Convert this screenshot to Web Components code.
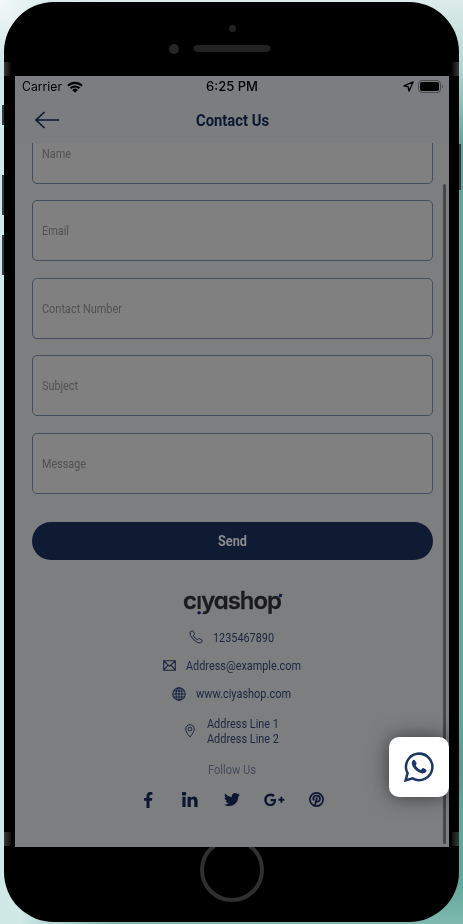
<!DOCTYPE html>
<html lang="en"><head><meta charset="utf-8"><title>Contact Us</title>
<style>html,body{margin:0;width:463px;height:924px;overflow:hidden}</style></head>
<body><contact-page></contact-page>
<script>
class FitText extends HTMLElement{
  connectedCallback(){
    const w=+this.getAttribute('w');
    const r=this.attachShadow({mode:'open'});
    r.innerHTML=`<style>:host{display:block;width:${w}px;white-space:nowrap;flex:none}span{display:inline-block;transform-origin:0 50%}</style><span><slot></slot></span>`;
    const s=r.querySelector('span');
    s.style.transform=`scaleX(${w/s.getBoundingClientRect().width})`;
  }
}
const GLYPHS={
 back:[24,18,'<path d="M24 9H1M9.500 1L1 9l8.500 8" fill="none" stroke="currentColor" stroke-width="1.6"/>'],
 wifi:[16,12,'<path d="M1 4.700a10 10 0 0 1 14 0M3.500 7.300a6.500 6.500 0 0 1 9 0" fill="none" stroke="currentColor" stroke-width="2.100"/><path d="M5.200 8.900a4 4 0 0 1 5.600 0L8 11.700z" fill="currentColor"/>'],
 nav:[11,11,'<path d="M10.200.8L.9 4.900l4.300.9.800 4.400z" fill="none" stroke="currentColor" stroke-width="1.300" stroke-linejoin="round"/>'],
 battery:[26,13,'<rect x=".5" y=".5" width="22" height="12" rx="3.500" fill="none" stroke="#484a4d"/><rect x="2" y="2" width="19" height="9" rx="2" fill="#000"/><path d="M24 4.500q2 1.700 0 4z" fill="#484a4d"/>'],
 phone:[14,14,'<path d="M1 2.200L3 .8q.6-.3 1 .3l1.500 2.500q.3.600-.2 1L4.200 5.600q1.400 2.800 4.200 4.200l1-1.100q.4-.5 1-.2l2.500 1.500q.6.400.3 1l-1.400 2q-2.800.9-7.300-3.500T1 2.200z" fill="none" stroke="currentColor" stroke-width="1"/>'],
 mail:[13,11,'<path d="M.7.8h11.600v9.400H.7zM.7.8l5.800 5.400L12.300.8M.7 10.200l4.200-5M12.300 10.200l-4.200-5" fill="none" stroke="currentColor" stroke-width="1.100"/>'],
 globe:[14,14,'<g fill="none" stroke="currentColor" stroke-width="1.100"><circle cx="7" cy="7" r="6.200"/><ellipse cx="7" cy="7" rx="3" ry="6.200"/><path d="M7 .8v12.400M.8 7h12.400M1.800 4h10.400M1.800 10h10.400"/></g>'],
 pin:[10,14,'<g fill="none" stroke="currentColor"><path d="M5 13Q.7 7.800.7 5a4.300 4.300 0 0 1 8.600 0Q9.300 7.800 5 13z"/><circle cx="5" cy="5" r="1.900"/></g>'],
 facebook:[10,16,'<path d="M9.400.2v2.600H7.900c-1.100 0-1.400.6-1.400 1.300v1.800h2.800l-.4 2.800H6.500V16h-3V8.700H1V5.900h2.500V3.800C3.500 1.400 5 0 7.200 0c1 0 1.900.1 2.200.2z" fill="currentColor"/>'],
 linkedin:[16,15,'<path d="M.4 4.800h3.200V15H.4zM2 0a1.800 1.800 0 1 1 0 3.500A1.800 1.800 0 1 1 2 0zM5.600 4.800h3.200v1.500c.5-.8 1.400-1.700 3-1.700 2.300 0 3.800 1.400 3.800 4.500V15h-3.300V9.500c0-1.400-.5-2.300-1.700-2.300S8.800 8.100 8.800 9.500V15H5.600z" fill="currentColor"/>'],
 twitter:[16,14,'<path d="M16 1.700c-.5.700-1 1.200-1.700 1.700v.4c0 4.500-3.300 9.300-9.300 9.300-1.800 0-3.600-.5-5-1.500 1.700.2 3.400-.3 4.800-1.400-1.400 0-2.600-1-3-2.300.5.100 1 .1 1.400-.1C1.700 7.500.6 6.200.6 4.600c.5.300 1 .4 1.500.4C.6 4 .2 2 1.100.6c1.600 2 4 3.300 6.800 3.400C7.400 1.900 9 0 11.100 0c1 0 1.800.4 2.400 1 .7-.1 1.400-.4 2-.8-.2.800-.7 1.400-1.400 1.800.7-.1 1.300-.2 1.900-.3z" fill="currentColor"/>'],
 google:[21,14,'<path d="M12 5.900c.5 4.400-2.200 7.200-5.400 7.200A6.300 6.300 0 1 1 10.800 2.200L9 4C8.300 3.400 7.500 3.100 6.600 3.100a3.900 3.900 0 0 0 0 7.800c1.900 0 2.900-1.200 3.100-2.600H6.600V5.900zM16.400 3.800h1.900v2h2v1.900h-2v2h-1.900v-2h-2V5.800h2z" fill="currentColor"/>'],
 pinterest:[15,15,'<circle cx="7.500" cy="7.500" r="6.600" fill="none" stroke="currentColor" stroke-width="1.700"/><path d="M5 8.400C3.300 5.700 5 3.600 7.600 3.600c4.600 0 4.200 6.100.8 6.100-.8 0-1.200-.4-1.400-.7M8 5.500L6 13" fill="none" stroke="currentColor" stroke-width="1.800"/>'],
 whatsapp:[30,30,'<path d="M1.600 28.400l2-7.200a13.200 13.200 0 1 1 5 5.100z" fill="none" stroke="currentColor" stroke-width="2.500"/><path d="M10.800 8.200c-.5-.9-1.400-.5-1.900 0-4.400 4.800 5.500 15 11.400 12.900 1.400-.5 2.200-1.400 2-3 0-.6-2.800-2-3.400-2-.7 0-1.300 1.700-2 1.800-1.600 0-5-3.300-5.100-4.600-.1-.7 1.100-1.100.8-2.200z" fill="currentColor"/>']
};
class UiIcon extends HTMLElement{
  connectedCallback(){
    const [w,h,p]=GLYPHS[this.getAttribute('name')];
    this.attachShadow({mode:'open'}).innerHTML=`<style>:host{display:block;width:${w}px;height:${h}px;flex:none}svg{display:block}</style><svg width="${w}" height="${h}" viewBox="0 0 ${w} ${h}">${p}</svg>`;
  }
}
class FormField extends HTMLElement{
  connectedCallback(){
    this.attachShadow({mode:'open'}).innerHTML=`<style>:host{box-sizing:border-box;height:61px;border:1px solid #454e60;border-radius:5px;background:#808080;display:flex;align-items:center;padding-left:9px;color:#515151;font-size:13px;flex:none}</style><fit-text w="${this.getAttribute('w')}">${this.getAttribute('label')}</fit-text>`;
  }
}
class ContactRow extends HTMLElement{
  connectedCallback(){
    this.attachShadow({mode:'open'}).innerHTML=`<style>:host{display:flex;justify-content:center;align-items:center;gap:var(--gap,10px);color:#1b2740;font-size:13px;line-height:15px}</style><ui-icon name="${this.getAttribute('icon')}"></ui-icon><div><slot></slot></div>`;
  }
}
class BrandLogo extends HTMLElement{
  connectedCallback(){
    this.attachShadow({mode:'open'}).innerHTML=`<style>:host{display:flex;align-items:flex-start;height:26px;font:600 24px/26px Inter,sans-serif;color:#1b1b1d;letter-spacing:-1px;font-feature-settings:"cv11"}
    .i{display:inline-block;height:26px;vertical-align:top;transform:translateY(3px) rotate(180deg);color:transparent;background:linear-gradient(#0b1b48 0 8px,#1b1b1d 8px);background-clip:text;-webkit-background-clip:text;letter-spacing:0;margin-right:-1px}
    b{width:3px;height:3px;margin:6px 0 0 -2px;background:#0b1b48;transform:rotate(20deg)}
    fit-text{-webkit-text-stroke:.3px #1b1b1d}.i{-webkit-text-stroke:0}</style><fit-text w="98">c<span class="i">i</span>yashop</fit-text><b></b>`;
  }
}
class PhoneTop extends HTMLElement{
  connectedCallback(){
    this.attachShadow({mode:'open'}).innerHTML=`<style>:host{height:74px;display:flex;flex-direction:column;align-items:center}
    .cam{width:7px;height:7px;border-radius:50%;background:#222;margin:23px 0 11.500px 2px}
    .sp{display:flex;align-items:center;gap:15px;margin-right:24px}.s{width:10px;height:10px;border-radius:50%;background:#272727}.bar{width:76px;height:7px;border-radius:3px;background:#222}
    .tags{display:flex;justify-content:space-between;align-self:stretch;margin-top:8.500px}.tags i{width:8px;height:14px;background:linear-gradient(90deg,#393939,#000)}.tags i+i{transform:scaleX(-1)}</style>
    <div class="cam"></div><div class="sp"><div class="s"></div><div class="bar"></div></div><div class="tags"><i></i><i></i></div>`;
  }
}
class ContactPage extends HTMLElement{
  connectedCallback(){
    this.attachShadow({mode:'open'}).innerHTML=`<style>
    :host{display:block;position:relative;box-sizing:border-box;width:463px;height:924px;padding:2px 4px;background:radial-gradient(circle at 0 0,#f4f9f8,transparent 60px),linear-gradient(90deg,#d0e8e6 0,#d0e8e6 20px,transparent 110px),linear-gradient(#dcecea 0,#b9dad5 60px,#5fa79b 145px,#5fa79b 880px,#7fb9af);font-family:Roboto,sans-serif}
    .btn{position:absolute;width:2px;left:2px;background:#393d3f}
    .phone{height:919.500px;border-radius:50px;background:#000;position:relative;overflow:hidden}
    .screen{margin:0 10px 0 11px;width:434px;height:771px;background:#7b7d80;display:flex;flex-direction:column;position:relative;overflow:hidden}
    .status{display:grid;grid-template-columns:1fr auto 1fr;align-items:center;height:22px;padding:0 7px 0 7px;font:12.500px/22px Inter,sans-serif;color:#000}
    .l,.r{display:flex;align-items:center;gap:5px}.r{justify-content:flex-end;gap:4px;height:21px;align-self:start;margin-right:-2px}.t{font-weight:550}
    .head{display:grid;grid-template-columns:1fr auto 1fr;align-items:center;height:45px;box-sizing:border-box;padding:0 20px 1px 20px;color:#0b1731;font-weight:700;font-size:16.500px}
    .body{flex:1;overflow:hidden;background:#7d7e80;display:flex;flex-direction:column;padding:0 16.500px}
    .form{display:flex;flex-direction:column;gap:16.500px;margin-top:-20.500px}
    .send{height:38.500px;margin-top:28px;border-radius:20px;background:#0f1b33;color:#8b8c8e;display:flex;align-items:center;justify-content:center;font-weight:700;font-size:15px;flex:none}
    .foot{display:flex;flex-direction:column;align-items:center}
    .soc{display:grid;grid-template-columns:repeat(5,42px);place-items:center;color:#0b1731;height:16px;margin-top:13.500px}
    .bar{position:absolute;right:3px;top:108px;width:3px;height:660px;border-radius:2px;background:#454648}
    .home{position:absolute;left:196px;top:836px;width:56px;height:56px;border:4px solid #303030;border-radius:50%}
    .tags{display:flex;justify-content:space-between;position:absolute;left:0;right:0;top:830px}.tags i{width:7px;height:14px;background:linear-gradient(90deg,#393939,#111)}.tags i+i{transform:scaleX(-1)}
    .wa{position:absolute;left:389px;top:737px;width:60px;height:60px;border-radius:10px;background:#fff;color:#1c3766;display:grid;place-items:center;box-shadow:0 0 20px rgba(0,0,0,.55)}
    </style>
    <i class="btn" style="top:105px;height:20px"></i><i class="btn" style="top:175px;height:40px"></i><i class="btn" style="top:235px;height:40px"></i><i class="btn" style="left:459px;top:144px;height:46px"></i>
    <div class="phone"><div class="home"></div><phone-top></phone-top><div class="tags"><i></i><i></i></div>
    <div class="screen">
      <div class="status"><div class="l"><fit-text w="40">Carrier</fit-text><ui-icon name="wifi"></ui-icon></div><fit-text class="t" w="52">6:25 PM</fit-text><div class="r"><ui-icon name="nav"></ui-icon><ui-icon name="battery"></ui-icon></div></div>
      <div class="head"><ui-icon name="back"></ui-icon><fit-text w="73">Contact Us</fit-text><span></span></div>
      <div class="body"><div class="form">
        <form-field label="Name" w="29"></form-field><form-field label="Email" w="27"></form-field><form-field label="Contact Number" w="80"></form-field><form-field label="Subject" w="36"></form-field><form-field label="Message" w="44"></form-field></div>
        <div class="send"><fit-text w="29">Send</fit-text></div>
        <div class="foot"><brand-logo style="margin-top:28px"></brand-logo>
        <contact-row icon="phone" style="margin-top:15.500px;margin-right:1px"><fit-text w="61">1235467890</fit-text></contact-row>
        <contact-row icon="mail" style="margin-top:13.500px;margin-right:1px"><fit-text w="115">Address@example.com</fit-text></contact-row>
        <contact-row icon="globe" style="margin-top:13px;margin-right:1px"><fit-text w="95">www.ciyashop.com</fit-text></contact-row>
        <contact-row icon="pin" style="margin-top:15px;--gap:12px"><fit-text w="72">Address Line 1</fit-text><fit-text w="72">Address Line 2</fit-text></contact-row>
        <div style="margin-top:16px;color:#454d5c;font-size:13px;line-height:16px"><fit-text w="48">Follow Us</fit-text></div>
        <div class="soc"><ui-icon name="facebook"></ui-icon><ui-icon name="linkedin"></ui-icon><ui-icon name="twitter"></ui-icon><ui-icon name="google"></ui-icon><ui-icon name="pinterest"></ui-icon></div></div>
      </div><div class="bar"></div>
    </div></div><div class="wa"><ui-icon name="whatsapp"></ui-icon></div>`;
  }
}
customElements.define('fit-text',FitText);customElements.define('ui-icon',UiIcon);customElements.define('form-field',FormField);customElements.define('contact-row',ContactRow);customElements.define('brand-logo',BrandLogo);customElements.define('phone-top',PhoneTop);customElements.define('contact-page',ContactPage);
</script></body></html>
